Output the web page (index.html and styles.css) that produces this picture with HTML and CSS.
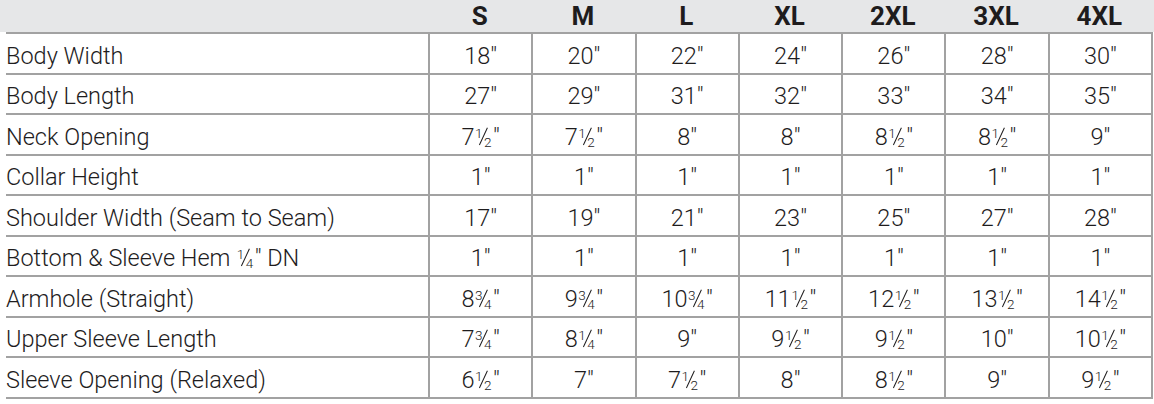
FILE: index.html
```html
<!DOCTYPE html>
<html lang="en">
<head>
<meta charset="utf-8">
<title>Size Chart</title>
<link rel="stylesheet" href="styles.css">
</head>
<body>
<div class="chart">
  <div class="head">
    <div class="head-grid">
      <div class="hcell"></div>
      <div class="hcell">S</div>
      <div class="hcell">M</div>
      <div class="hcell">L</div>
      <div class="hcell">XL</div>
      <div class="hcell">2XL</div>
      <div class="hcell">3XL</div>
      <div class="hcell">4XL</div>
    </div>
  </div>
  <div class="body">
    <div class="row">
      <div class="label">Body Width</div>
      <div class="val">18"</div><div class="val">20"</div><div class="val">22"</div><div class="val">24"</div><div class="val">26"</div><div class="val">28"</div><div class="val">30"</div>
    </div>
    <div class="row">
      <div class="label">Body Length</div>
      <div class="val">27"</div><div class="val">29"</div><div class="val">31"</div><div class="val">32"</div><div class="val">33"</div><div class="val">34"</div><div class="val">35"</div>
    </div>
    <div class="row">
      <div class="label">Neck Opening</div>
      <div class="val">7<span class="frac"><span class="num">1</span><span class="den">2</span></span>"</div>
      <div class="val">7<span class="frac"><span class="num">1</span><span class="den">2</span></span>"</div>
      <div class="val">8"</div>
      <div class="val">8"</div>
      <div class="val">8<span class="frac"><span class="num">1</span><span class="den">2</span></span>"</div>
      <div class="val">8<span class="frac"><span class="num">1</span><span class="den">2</span></span>"</div>
      <div class="val">9"</div>
    </div>
    <div class="row">
      <div class="label">Collar Height</div>
      <div class="val">1"</div><div class="val">1"</div><div class="val">1"</div><div class="val">1"</div><div class="val">1"</div><div class="val">1"</div><div class="val">1"</div>
    </div>
    <div class="row">
      <div class="label">Shoulder Width (Seam to Seam)</div>
      <div class="val">17"</div><div class="val">19"</div><div class="val">21"</div><div class="val">23"</div><div class="val">25"</div><div class="val">27"</div><div class="val">28"</div>
    </div>
    <div class="row">
      <div class="label">Bottom &amp; Sleeve Hem <span class="frac"><span class="num">1</span><span class="den">4</span></span>" DN</div>
      <div class="val">1"</div><div class="val">1"</div><div class="val">1"</div><div class="val">1"</div><div class="val">1"</div><div class="val">1"</div><div class="val">1"</div>
    </div>
    <div class="row">
      <div class="label">Armhole (Straight)</div>
      <div class="val">8<span class="frac"><span class="num">3</span><span class="den">4</span></span>"</div>
      <div class="val">9<span class="frac"><span class="num">3</span><span class="den">4</span></span>"</div>
      <div class="val">10<span class="frac"><span class="num">3</span><span class="den">4</span></span>"</div>
      <div class="val">11<span class="frac"><span class="num">1</span><span class="den">2</span></span>"</div>
      <div class="val">12<span class="frac"><span class="num">1</span><span class="den">2</span></span>"</div>
      <div class="val">13<span class="frac"><span class="num">1</span><span class="den">2</span></span>"</div>
      <div class="val">14<span class="frac"><span class="num">1</span><span class="den">2</span></span>"</div>
    </div>
    <div class="row">
      <div class="label">Upper Sleeve Length</div>
      <div class="val">7<span class="frac"><span class="num">3</span><span class="den">4</span></span>"</div>
      <div class="val">8<span class="frac"><span class="num">1</span><span class="den">4</span></span>"</div>
      <div class="val">9"</div>
      <div class="val">9<span class="frac"><span class="num">1</span><span class="den">2</span></span>"</div>
      <div class="val">9<span class="frac"><span class="num">1</span><span class="den">2</span></span>"</div>
      <div class="val">10"</div>
      <div class="val">10<span class="frac"><span class="num">1</span><span class="den">2</span></span>"</div>
    </div>
    <div class="row">
      <div class="label">Sleeve Opening (Relaxed)</div>
      <div class="val">6<span class="frac"><span class="num">1</span><span class="den">2</span></span>"</div>
      <div class="val">7"</div>
      <div class="val">7<span class="frac"><span class="num">1</span><span class="den">2</span></span>"</div>
      <div class="val">8"</div>
      <div class="val">8<span class="frac"><span class="num">1</span><span class="den">2</span></span>"</div>
      <div class="val">9"</div>
      <div class="val">9<span class="frac"><span class="num">1</span><span class="den">2</span></span>"</div>
    </div>
  </div>
</div>
</body>
</html>
```

FILE: styles.css
```css
html, body {
  margin: 0;
  padding: 0;
  background: #ffffff;
}

.chart {
  width: 1154px;
  font-family: Roboto, "Liberation Sans", sans-serif;
  color: #1e1c1d;
}

.head {
  background: #e6e7e8;
  height: 32px;
}

.head-grid {
  display: grid;
  grid-template-columns: 422px repeat(7, 1fr);
  width: 1153px;
  box-sizing: border-box;
  padding-left: 6px;
  padding-right: 2px;
  height: 32px;
}

.hcell {
  text-align: center;
  font-weight: 700;
  font-size: 26px;
  line-height: 32px;
  height: 32px;
}

.body {
  width: 1147px;
  margin-left: 6px;
  border-top: 2px solid #a2a2a2;
}

.row {
  display: grid;
  grid-template-columns: 422px repeat(7, 1fr);
  grid-template-rows: 38.5px;
  height: 40.5px;
  box-sizing: border-box;
  border-bottom: 2px solid #a2a2a2;
  border-right: 2px solid #a2a2a2;
}

.label,
.val {
  font-size: 23.5px;
  font-weight: 300;
  line-height: 33.5px;
  padding-top: 5.5px;
  white-space: nowrap;
  box-sizing: border-box;
  height: 38.5px;
}

.label {
  padding-left: 0;
}

.val {
  text-align: center;
  border-left: 2px solid #a2a2a2;
}

.frac {
  position: relative;
  margin: 0 1.5px 0 0.5px;
}

.frac::after {
  content: "";
  position: absolute;
  left: 50%;
  top: 4px;
  width: 1.2px;
  height: 18.5px;
  margin-left: 0.2px;
  background: #1e1c1d;
  transform: rotate(25deg);
}

.num,
.den {
  font-size: 13.5px;
  line-height: 0;
}

.num {
  vertical-align: 7.5px;
}

.den {
  vertical-align: -2px;
  margin-left: 1.5px;
}
```
